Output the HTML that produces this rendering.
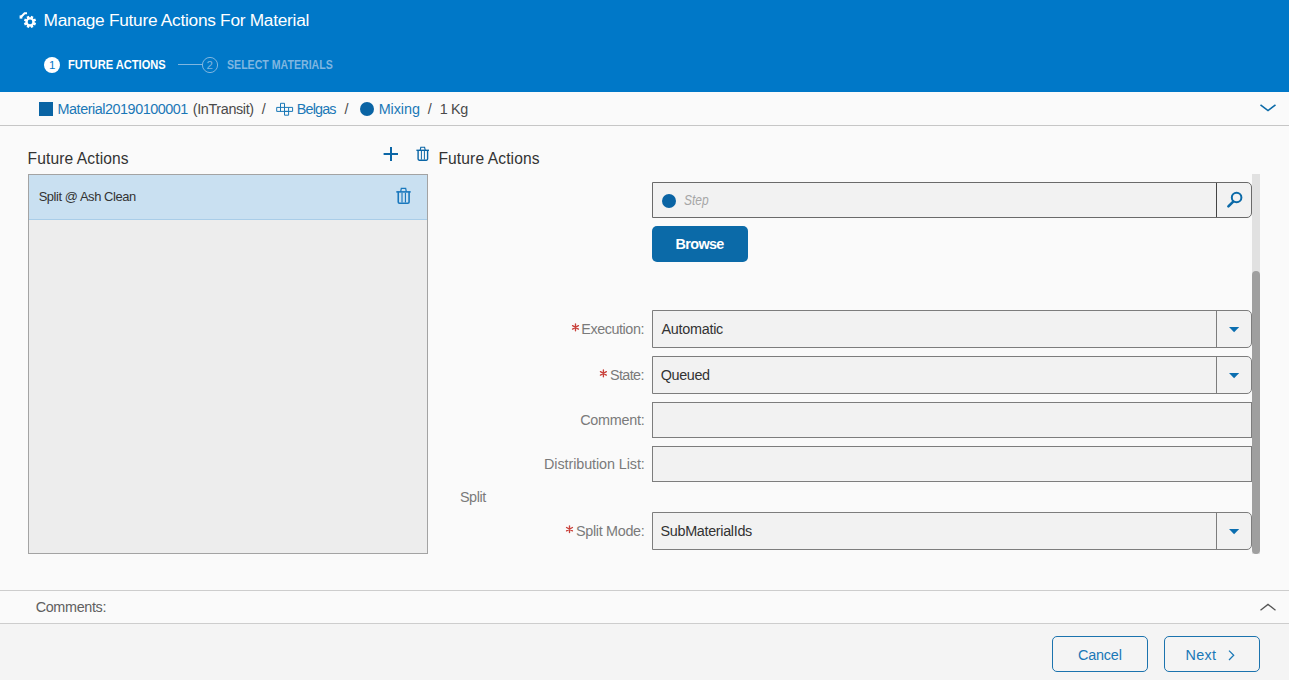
<!DOCTYPE html>
<html><head><meta charset="utf-8">
<style>
*{box-sizing:border-box;margin:0;padding:0}
html,body{width:1289px;height:680px;overflow:hidden;background:#fafafa;font-family:"Liberation Sans",sans-serif}
.a{position:absolute;white-space:pre;line-height:1}
.p{position:absolute}
svg{position:absolute;overflow:visible}
#hdr{left:0;top:0;width:1289px;height:92px;background:#0078c8}
#bc{left:0;top:92px;width:1289px;height:34px;background:#fafafa;border-bottom:1px solid #c6c6c6}
#list{left:28px;top:174px;width:400px;height:380px;background:#ededed;border:1px solid #a3a3a3}
#sel{left:0;top:0;width:398px;height:45px;background:#c9e0f1;border-bottom:1px solid #a9cde8}
.fld{position:absolute;left:652px;width:600px;background:#f2f2f2;border:1px solid #7d7d7d}
.dd{border-radius:0 5px 5px 0}
.sep{position:absolute;left:563px;top:0;bottom:0;width:1px;background:#7d7d7d}
#track{left:1252px;top:174px;width:8px;height:380px;background:#e1e1e1}
#thumb{left:1252px;top:271px;width:8px;height:283px;background:#9f9f9f;border-radius:4px}
#cbar{left:0;top:590px;width:1289px;height:34px;background:#fafafa;border-top:1px solid #cdcdcd;border-bottom:1px solid #cdcdcd}
#foot{left:0;top:624px;width:1289px;height:56px;background:#f4f4f4}
.btn{position:absolute;top:636px;height:36px;border:1.5px solid #1b73ae;border-radius:5px;background:#f4f4f4}
#browse{left:652px;top:226px;width:96px;height:36px;background:#0b6aa8;border-radius:5px}
</style></head><body>
<div class="p" id="hdr"></div>
<div class="p" id="bc"></div>
<div class="p" id="list"><div class="p" id="sel"></div></div>
<div class="p" id="track"></div><div class="p" id="thumb"></div>

<!-- step field -->
<div class="fld dd" style="top:182px;height:36px;border-color:#6a6a6a"><div class="sep" style="background:#444"></div></div>
<div class="p" style="left:662px;top:194px;width:14px;height:14px;border-radius:50%;background:#0a64a4"></div>
<div class="p" id="browse"></div>

<!-- form fields -->
<div class="fld dd" style="top:310px;height:38px"><div class="sep"></div></div>
<div class="fld dd" style="top:356px;height:38px"><div class="sep"></div></div>
<div class="fld" style="top:402px;height:36px"></div>
<div class="fld" style="top:446px;height:36px"></div>
<div class="fld dd" style="top:512px;height:38px"><div class="sep"></div></div>

<div class="p" id="cbar"></div>
<div class="p" id="foot"></div>
<div class="btn" style="left:1052px;width:96px"></div>
<div class="btn" style="left:1164px;width:96px"></div>

<svg width="1289" height="680" viewBox="0 0 1289 680" style="left:0;top:0">
<defs>
<g id="trash" fill="none" stroke-linecap="butt">
<path d="M3.9,3.4 L4.5,0.5 H8.3 L8.9,3.4" stroke-width="1.1"/>
<path d="M0.1,3.5 H12.7" stroke-width="1.4"/>
<path d="M1.8,3.4 V12.3 Q1.8,13.4 2.9,13.4 H10.2 Q11.3,13.4 11.3,12.3 V3.4" stroke-width="1.4"/>
<path d="M5.1,4.2 V12.8 M8.1,4.2 V12.8" stroke-width="1"/>
</g>
<g id="ast" stroke-width="1.35" stroke-linecap="round">
<path d="M0,-3.4 V3.4 M-2.95,-1.7 L2.95,1.7 M-2.95,1.7 L2.95,-1.7"/>
</g>
</defs>
<!-- header gear -->
<g fill="#fff">
<circle cx="30" cy="21.9" r="4.6"/>
<g transform="translate(30 21.9) rotate(22.5)">
<rect x="-1.25" y="-6.1" width="2.5" height="12.2"/>
<rect x="-6.1" y="-1.25" width="12.2" height="2.5"/>
<rect x="-1.25" y="-6.1" width="2.5" height="12.2" transform="rotate(45)"/>
<rect x="-6.1" y="-1.25" width="12.2" height="2.5" transform="rotate(45)"/>
</g>
<circle cx="30" cy="21.9" r="2.3" fill="#0078c8"/>
<rect x="19.6" y="15.4" width="2.7" height="3.2"/>
<path d="M21.2,16.8 L24.6,13.2 H27" fill="none" stroke="#fff" stroke-width="2"/>
</g>
<!-- steps -->
<circle cx="52" cy="65" r="8" fill="#fff"/>
<path d="M178,64.5 H202.3" stroke="#7fb6e0" stroke-width="1"/>
<circle cx="210" cy="65" r="7.6" fill="none" stroke="#7fb6e0" stroke-width="1"/>
<!-- breadcrumb icons -->
<rect x="39" y="102" width="14" height="14" fill="#0a64a4"/>
<g fill="none" stroke="#1a78b7" stroke-width="1">
<path d="M280.5,107.4 V103.3 H284.5 V115.2 H288.6 V107.4 M276.7,107.4 H292.6 V111.4 H276.7 Z M280.5,107.4 V111.4 M284.5,111.4 H288.6"/>
</g>
<circle cx="367" cy="109" r="7" fill="#0a64a4"/>
<path d="M1260.5,104.8 L1268,110.6 L1275.5,104.8" fill="none" stroke="#0b6aa8" stroke-width="1.6"/>
<!-- plus, trash -->
<path d="M383.6,154 H398 M391,146.9 V161.1" stroke="#0b66a6" stroke-width="2"/>
<use href="#trash" transform="translate(416.3 146.8)" stroke="#0b66a6"/>
<use href="#trash" transform="translate(396.2 187.9) scale(1.14)" stroke="#1a78bd"/>
<!-- magnifier -->
<circle cx="1236.6" cy="197.5" r="4.8" fill="none" stroke="#0b6aa8" stroke-width="2"/>
<path d="M1228.4,206.4 L1233.2,201.6" stroke="#0b6aa8" stroke-width="2.6" stroke-linecap="round"/>
<!-- dropdown triangles -->
<g fill="#0b6eb0">
<path d="M1229,327 H1239.2 L1234.1,332.3 Z"/>
<path d="M1229,373 H1239.2 L1234.1,378.3 Z"/>
<path d="M1229,529 H1239.2 L1234.1,534.3 Z"/>
</g>
<!-- asterisks -->
<g stroke="#c9403a">
<use href="#ast" transform="translate(575.5 327.4)"/>
<use href="#ast" transform="translate(603.4 373.4)"/>
<use href="#ast" transform="translate(569.5 529.2)"/>
</g>
<!-- comments chevron -->
<path d="M1260.5,610.2 L1268,604.4 L1275.5,610.2" fill="none" stroke="#555" stroke-width="1.3"/>
<!-- next chevron -->
<path d="M1229,650.6 L1233.7,655.3 L1229,660" fill="none" stroke="#1a78b7" stroke-width="1.25"/>
</svg>

<div class="a" style="left:49.08px;top:59.78px;font-size:11.48px;letter-spacing:0.000px;color:#0078c8;font-weight:400;font-style:normal">1</div>
<div class="a" style="left:206.53px;top:59.78px;font-size:11.48px;letter-spacing:0.000px;color:#7fb6e0;font-weight:400;font-style:normal">2</div>
<div class="a" style="left:43.62px;top:11.85px;font-size:17.30px;letter-spacing:-0.273px;color:#fff;font-weight:400;font-style:normal">Manage Future Actions For Material</div>
<div class="a" style="left:67.82px;top:58.55px;font-size:12.94px;transform:scaleX(0.8593);transform-origin:0 0;color:#fff;font-weight:700;font-style:normal">FUTURE ACTIONS</div>
<div class="a" style="left:226.68px;top:58.55px;font-size:12.94px;transform:scaleX(0.8191);transform-origin:0 0;color:#7fb6e0;font-weight:700;font-style:normal">SELECT MATERIALS</div>
<div class="a" style="left:57.55px;top:102.31px;font-size:14.39px;letter-spacing:-0.460px;color:#1a78b7;font-weight:400;font-style:normal">Material20190100001</div>
<div class="a" style="left:192.84px;top:102.31px;font-size:14.39px;letter-spacing:-0.371px;color:#4a4a4a;font-weight:400;font-style:normal">(InTransit)</div>
<div class="a" style="left:261.70px;top:102.31px;font-size:14.39px;letter-spacing:0.000px;color:#4a4a4a;font-weight:400;font-style:normal">/</div>
<div class="a" style="left:296.85px;top:102.31px;font-size:14.39px;letter-spacing:-0.861px;color:#1a78b7;font-weight:400;font-style:normal">Belgas</div>
<div class="a" style="left:344.50px;top:102.31px;font-size:14.39px;letter-spacing:0.000px;color:#4a4a4a;font-weight:400;font-style:normal">/</div>
<div class="a" style="left:378.65px;top:102.31px;font-size:14.39px;letter-spacing:-0.045px;color:#1a78b7;font-weight:400;font-style:normal">Mixing</div>
<div class="a" style="left:427.80px;top:102.31px;font-size:14.39px;letter-spacing:0.000px;color:#4a4a4a;font-weight:400;font-style:normal">/</div>
<div class="a" style="left:439.85px;top:102.31px;font-size:14.39px;letter-spacing:-0.361px;color:#4a4a4a;font-weight:400;font-style:normal">1 Kg</div>
<div class="a" style="left:27.55px;top:151.29px;font-size:15.60px;letter-spacing:0.110px;color:#333;font-weight:400;font-style:normal">Future Actions</div>
<div class="a" style="left:438.45px;top:151.29px;font-size:15.60px;letter-spacing:0.110px;color:#333;font-weight:400;font-style:normal">Future Actions</div>
<div class="a" style="left:38.65px;top:190.55px;font-size:12.94px;letter-spacing:-0.436px;color:#333;font-weight:400;font-style:normal">Split @ Ash Clean</div>
<div class="a" style="left:683.94px;top:193.31px;font-size:14.39px;transform:scaleX(0.8346);transform-origin:0 0;color:#a6a6a6;font-weight:400;font-style:italic">Step</div>
<div class="a" style="left:675.59px;top:237.31px;font-size:14.39px;letter-spacing:-0.641px;color:#fff;font-weight:700;font-style:normal">Browse</div>
<div class="a" style="left:581.35px;top:322.31px;font-size:14.39px;letter-spacing:-0.450px;color:#7a7a7a;font-weight:400;font-style:normal">Execution:</div>
<div class="a" style="left:661.40px;top:322.31px;font-size:14.39px;letter-spacing:-0.250px;color:#333;font-weight:400;font-style:normal">Automatic</div>
<div class="a" style="left:609.98px;top:368.31px;font-size:14.39px;letter-spacing:-0.608px;color:#7a7a7a;font-weight:400;font-style:normal">State:</div>
<div class="a" style="left:660.68px;top:368.31px;font-size:14.39px;letter-spacing:-0.360px;color:#333;font-weight:400;font-style:normal">Queued</div>
<div class="a" style="left:580.18px;top:413.31px;font-size:14.39px;letter-spacing:-0.232px;color:#7a7a7a;font-weight:400;font-style:normal">Comment:</div>
<div class="a" style="left:544.05px;top:457.31px;font-size:14.39px;letter-spacing:-0.086px;color:#7a7a7a;font-weight:400;font-style:normal">Distribution List:</div>
<div class="a" style="left:459.88px;top:490.31px;font-size:14.39px;letter-spacing:-0.399px;color:#7a7a7a;font-weight:400;font-style:normal">Split</div>
<div class="a" style="left:575.98px;top:524.31px;font-size:14.39px;letter-spacing:-0.313px;color:#7a7a7a;font-weight:400;font-style:normal">Split Mode:</div>
<div class="a" style="left:660.58px;top:524.31px;font-size:14.39px;letter-spacing:-0.322px;color:#333;font-weight:400;font-style:normal">SubMaterialIds</div>
<div class="a" style="left:35.68px;top:600.31px;font-size:14.39px;letter-spacing:-0.339px;color:#606060;font-weight:400;font-style:normal">Comments:</div>
<div class="a" style="left:1077.98px;top:648.31px;font-size:14.39px;letter-spacing:-0.174px;color:#1a78b7;font-weight:400;font-style:normal">Cancel</div>
<div class="a" style="left:1185.45px;top:648.31px;font-size:14.39px;letter-spacing:0.351px;color:#1a78b7;font-weight:400;font-style:normal">Next</div>

</body></html>
